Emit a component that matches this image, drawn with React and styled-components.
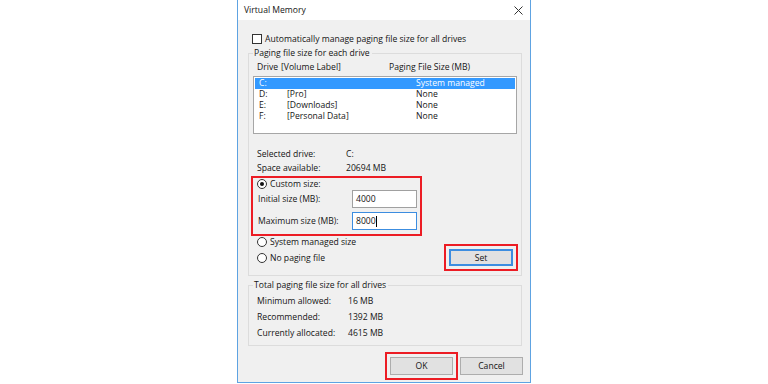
import React from "react";
import styled, { createGlobalStyle } from "styled-components";

const GlobalStyle = createGlobalStyle`
  html, body {
    margin: 0;
    padding: 0;
    background: #ffffff;
  }
  body {
    font-family: "Open Sans", "Noto Sans", "Liberation Sans", sans-serif;
    font-size: 8.6px;
    color: #141414;
  }
`;

const Window = styled.div`
  width: 292px;
  height: 382px;
  margin: 0 auto;
  border: 1px solid #5ea3e2;
  border-top: none;
  background: #f0f0f0;
  display: flex;
  flex-direction: column;
`;

const TitleBar = styled.div`
  height: 20px;
  background: #ffffff;
  display: flex;
  align-items: center;
  justify-content: space-between;
  padding: 0 7px 0 6px;
`;

const Content = styled.div`
  padding: 0 8px 0 10px;
  display: flex;
  flex-direction: column;
`;

const CheckRow = styled.label`
  display: flex;
  align-items: center;
  gap: 3px;
  height: 12px;
  margin-top: 13px;
  padding-left: 4px;
`;

const CheckBox = styled.span`
  width: 8px;
  height: 8px;
  border: 1px solid #333;
  background: #fff;
`;

const Group = styled.fieldset`
  margin: ${(p) => p.$top}px 0 0 0;
  padding: 0 4px ${(p) => p.$bottom}px 4px;
  border: 1px solid #dcdcdc;
  min-width: 0;
`;

const Legend = styled.legend`
  padding: 0 2px 0 1px;
  line-height: 12px;
`;

const HeaderRow = styled.div`
  display: flex;
  height: 12px;
  line-height: 12px;
  margin-top: 2px;
  padding-left: 4px;
`;

const Col = styled.span`
  width: ${(p) => p.$w}px;
  flex: none;
  white-space: nowrap;
`;

const List = styled.div`
  margin-top: 3px;
  height: 55px;
  background: #fff;
  border: 1px solid #a6a6a6;
  padding-top: 1px;
`;

const ListRow = styled.div`
  display: flex;
  height: 11px;
  line-height: 11px;
  padding-left: 4px;
  margin: 0 1px;
  background: ${(p) => (p.$selected ? "#3399ff" : "transparent")};
  color: ${(p) => (p.$selected ? "#ffffff" : "inherit")};
`;

const InfoBlock = styled.div`
  margin-top: ${(p) => p.$top}px;
  padding-left: 4px;
`;

const InfoRow = styled.div`
  display: flex;
  height: ${(p) => p.$h}px;
  line-height: ${(p) => p.$h}px;
`;

const Highlight = styled.div`
  margin-top: 1px;
  margin-left: -2px;
  width: 160px;
  border: 2px solid #ec1c24;
  padding: 0 3px 4px 4px;
  display: flex;
  flex-direction: column;
  gap: 4px;
`;

const RadioRow = styled.label`
  display: flex;
  align-items: center;
  gap: 3px;
  height: 12px;
`;

const Radio = styled.span`
  width: 8px;
  height: 8px;
  border-radius: 50%;
  border: 1px solid #333;
  background: #fff;
  display: flex;
  align-items: center;
  justify-content: center;
  &::after {
    content: "";
    width: 4px;
    height: 4px;
    border-radius: 50%;
    background: ${(p) => (p.$checked ? "#111" : "transparent")};
  }
`;

const SizeRow = styled.div`
  display: flex;
  align-items: center;
  justify-content: space-between;
  padding-left: 1px;
  margin-top: ${(p) => p.$top || 0}px;
`;

const Input = styled.div`
  width: 60px;
  height: 16px;
  line-height: 16px;
  padding-left: 3px;
  background: #fff;
  border: 1px solid ${(p) => (p.$focus ? "#3c8de0" : "#a0a0a0")};
  display: flex;
  align-items: center;
`;

const Caret = styled.span`
  width: 1px;
  height: 11px;
  background: #000;
`;

const OptionsRow = styled.div`
  display: flex;
  align-items: flex-start;
  justify-content: space-between;
  margin-top: 0;
  padding-left: 4px;
`;

const Radios = styled.div`
  display: flex;
  flex-direction: column;
  gap: 4px;
`;

const Button = styled.button`
  width: 63px;
  height: 18px;
  padding: 0;
  font: inherit;
  color: inherit;
  background: #e1e1e1;
  border: 1px solid ${(p) => (p.$default ? "#3c8de0" : "#adadad")};
  box-shadow: ${(p) => (p.$default ? "inset 0 0 0 1px #3c8de0" : "none")};
  outline: ${(p) => (p.$marked ? "2px solid #ec1c24" : "none")};
  outline-offset: 3px;
`;

const SetButton = styled(Button)`
  width: 64px;
  height: 17px;
  margin-top: 13px;
  margin-right: 4px;
`;

const ButtonRow = styled.div`
  display: flex;
  justify-content: flex-end;
  gap: 7px;
  margin-top: 11px;
  margin-right: -1px;
`;

export default function App() {
  return (
    <>
      <GlobalStyle />
      <Window>
        <TitleBar>
          <span>Virtual Memory</span>
          <svg width="9" height="9" viewBox="0 0 9 9">
            <path d="M0.5 0.5 L8.5 8.5 M8.5 0.5 L0.5 8.5" stroke="#333" strokeWidth="1" />
          </svg>
        </TitleBar>
        <Content>
          <CheckRow>
            <CheckBox />
            <span>Automatically manage paging file size for all drives</span>
          </CheckRow>

          <Group $top={2} $bottom={9}>
            <Legend>Paging file size for each drive</Legend>
            <HeaderRow>
              <Col $w={24}>Drive</Col>
              <Col $w={108}>[Volume Label]</Col>
              <Col $w={120}>Paging File Size (MB)</Col>
            </HeaderRow>
            <List>
              <ListRow $selected>
                <Col $w={28}>C:</Col>
                <Col $w={129}></Col>
                <Col $w={90}>System managed</Col>
              </ListRow>
              <ListRow>
                <Col $w={28}>D:</Col>
                <Col $w={129}>[Pro]</Col>
                <Col $w={90}>None</Col>
              </ListRow>
              <ListRow>
                <Col $w={28}>E:</Col>
                <Col $w={129}>[Downloads]</Col>
                <Col $w={90}>None</Col>
              </ListRow>
              <ListRow>
                <Col $w={28}>F:</Col>
                <Col $w={129}>[Personal Data]</Col>
                <Col $w={90}>None</Col>
              </ListRow>
            </List>

            <InfoBlock $top={13}>
              <InfoRow $h={14}>
                <Col $w={89}>Selected drive:</Col>
                <span>C:</span>
              </InfoRow>
              <InfoRow $h={14}>
                <Col $w={89}>Space available:</Col>
                <span>20694 MB</span>
              </InfoRow>
            </InfoBlock>

            <Highlight>
              <RadioRow>
                <Radio $checked />
                <span>Custom size:</span>
              </RadioRow>
              <SizeRow $top={-4}>
                <span>Initial size (MB):</span>
                <Input>4000</Input>
              </SizeRow>
              <SizeRow>
                <span>Maximum size (MB):</span>
                <Input $focus>
                  8000
                  <Caret />
                </Input>
              </SizeRow>
            </Highlight>

            <OptionsRow>
              <Radios>
                <RadioRow>
                  <Radio />
                  <span>System managed size</span>
                </RadioRow>
                <RadioRow>
                  <Radio />
                  <span>No paging file</span>
                </RadioRow>
              </Radios>
              <SetButton $default $marked>Set</SetButton>
            </OptionsRow>
          </Group>

          <Group $top={3} $bottom={4}>
            <Legend>Total paging file size for all drives</Legend>
            <InfoBlock $top={2}>
              <InfoRow $h={16}>
                <Col $w={91}>Minimum allowed:</Col>
                <span>16 MB</span>
              </InfoRow>
              <InfoRow $h={16}>
                <Col $w={91}>Recommended:</Col>
                <span>1392 MB</span>
              </InfoRow>
              <InfoRow $h={16}>
                <Col $w={91}>Currently allocated:</Col>
                <span>4615 MB</span>
              </InfoRow>
            </InfoBlock>
          </Group>

          <ButtonRow>
            <Button $marked>OK</Button>
            <Button>Cancel</Button>
          </ButtonRow>
        </Content>
      </Window>
    </>
  );
}
